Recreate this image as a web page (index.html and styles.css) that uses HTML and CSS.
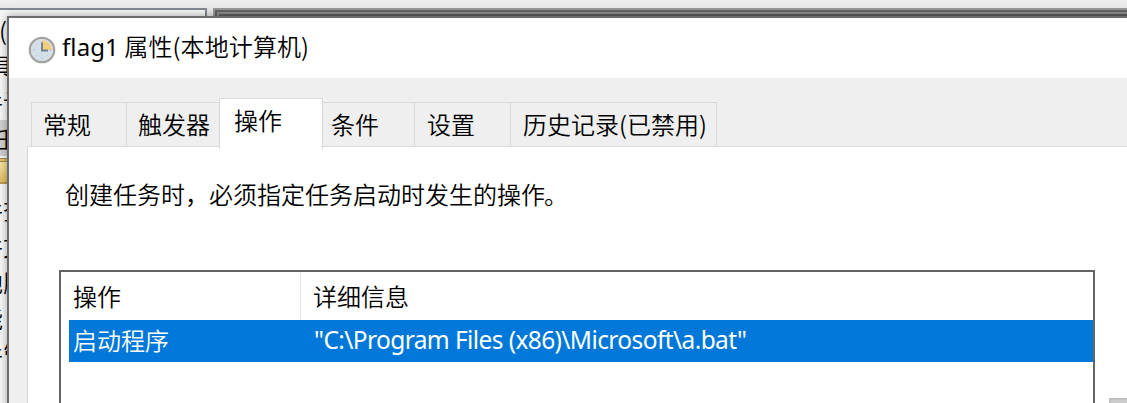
FILE: index.html
```
<!DOCTYPE html>
<html lang="zh-CN">
<head>
<meta charset="utf-8">
<title>flag1 属性</title>
<link rel="stylesheet" href="styles.css">
</head>
<body>
<div class="desktop">
  <div class="tree">
    <span class="node root">(本</span>
    <span class="node n1">具</span>
    <span class="node n2">件计</span>
    <span class="node n3 selected">任</span>
    <span class="folder"></span>
    <span class="node n4">件查</span>
    <span class="node n5">件文</span>
    <span class="node n6">地服</span>
    <span class="node n7">能</span>
    <span class="node n8">件管</span>
  </div>
  <div class="backpane"></div>
  <div class="dialog">
    <header class="titlebar">
      <svg class="clock" viewBox="0 0 28 28">
        <circle cx="14" cy="14" r="12.2" fill="#d3e0e9" stroke="#a2a2a0" stroke-width="2.2"/>
        <path d="M14 14V4A10 10 0 0 1 24 14Z" fill="#f2cf7d"/>
        <circle cx="14" cy="14" r="10.6" fill="none" stroke="#dadedf" stroke-width="1"/>
        <path d="M14 5v2M14 21v2M5 14h2M21 14h2M7.7 7.7l1 1M19.3 19.3l1 1M7.7 20.3l1-1M20.3 7.7l-1 1" stroke="#b3c1ca" stroke-width="1"/>
        <path d="M14 6.5V14.5H20" fill="none" stroke="#75838c" stroke-width="2"/>
      </svg>
      <h1 class="title"><span class="latin">flag1</span> 属性(本地计算机)</h1>
    </header>
    <nav class="tabs">
      <div class="tab general">常规</div>
      <div class="tab trigger">触发器</div>
      <div class="tab active">操作</div>
      <div class="tab condition">条件</div>
      <div class="tab settings">设置</div>
      <div class="tab history">历史记录(已禁用)</div>
    </nav>
    <main class="panel">
      <p class="hint">创建任务时，必须指定任务启动时发生的操作<span class="stop">。</span></p>
      <div class="list">
        <div class="row head"><div class="cell first">操作</div><div class="cell">详细信息</div></div>
        <div class="row picked"><div class="cell first">启动程序</div><div class="cell path">"C:\Program Files (x86)\Microsoft\a.bat"</div></div>
      </div>
      <div class="scroll"></div>
    </main>
  </div>
</div>
</body>
</html>
```
FILE: styles.css
```
* { box-sizing: border-box; }
body { margin: 0; }
.desktop {
  position: relative;
  width: 1127px;
  height: 403px;
  overflow: hidden;
  background: linear-gradient(#efefef 0, #e6e6e6 9px, #e6e6e6 100%);
  font: 24px/36px "Noto Sans CJK SC", sans-serif;
  font-weight: 350;
  color: #000;
}
.tree {
  position: absolute;
  left: -2px;
  top: 8px;
  width: 209px;
  height: 400px;
  border: 2px solid #828790;
  background: #f6f6f6;
  overflow: hidden;
}
.node { position: absolute; left: -21px; white-space: nowrap; }
.root { top: 2px; left: -1px; }
.n1 { top: 38px; left: -11px; }
.n2 { top: 74px; }
.n3 { top: 110px; left: -9px; }
.n4 { top: 182px; }
.n5 { top: 218px; }
.n6 { top: 254px; }
.n7 { top: 290px; }
.n8 { top: 326px; }
.selected { background: #cfcfcf; }
.folder {
  position: absolute;
  left: -3px;
  top: 148px;
  width: 16px;
  height: 26px;
  border: 2px solid #bb9a50;
  border-top: 4px double #9b854f;
  background: linear-gradient(#f6e3a0, #e0bd60);
}
.backpane {
  position: absolute;
  left: 213px;
  top: 8px;
  width: 920px;
  height: 100px;
  border: 2px solid #979797;
  background: #505050;
  box-shadow: inset 0 0 0 2px #646464, inset 0 0 0 4px #8d8d8d, inset 0 0 0 6px #5c5c5c;
}
.dialog {
  position: absolute;
  left: 7px;
  top: 16px;
  width: 1140px;
  height: 400px;
  border: 2px solid #6c6c6c;
  background: #efefef;
  box-shadow: 0 0 8px rgba(0,0,0,.35);
  display: flex;
  flex-direction: column;
}
.titlebar {
  height: 60px;
  flex: none;
  display: flex;
  align-items: flex-start;
  padding: 17px 0 0 19px;
  background: #fff;
}
.clock { width: 28px; height: 28px; margin-top: 1px; }
.title {
  margin: -7px 0 0 6px;
  font: inherit;
  letter-spacing: .1px;
  white-space: nowrap;
}
.latin { font-family: "Noto Sans", sans-serif; font-weight: 400; }
.tabs {
  display: flex;
  align-items: flex-end;
  height: 69px;
  padding-left: 22px;
  flex: none;
}
.tab {
  height: 45px;
  padding: 3px 0 0 11px;
  border: 1px solid #d9d9d9;
  border-right: 0;
  white-space: nowrap;
}
.general { width: 95px; }
.trigger { width: 93px; }
.active {
  width: 104px;
  height: 51px;
  margin-bottom: -2px;
  padding-left: 14px;
  border-right: 1px solid #d9d9d9;
  border-bottom: 0;
  background: #fff;
  position: relative;
  z-index: 1;
}
.condition { width: 91px; padding-left: 8px; border-left: 0; }
.settings { width: 96px; padding-left: 12px; }
.history { width: 207px; padding-left: 12px; border-right: 1px solid #d9d9d9; }
.panel {
  position: relative;
  flex: 1;
  margin: -1px 0 0 18px;
  padding: 29px 0 0 31px;
  border: 1px solid #d9d9d9;
  background: #fff;
}
.hint { margin: 0 0 0 6px; height: 94px; white-space: nowrap; }
.stop { margin-left: -1px; }
.list {
  width: 1036px;
  height: 160px;
  border: 2px solid #646464;
}
.row { display: flex; margin-left: 8px; white-space: nowrap; }
.head { height: 48px; line-height: 48px; }
.picked { height: 42px; line-height: 39px; background: #0078d9; color: #fff; }
.cell { padding-left: 12px; }
.first { width: 232px; padding-left: 4px; }
.head .first { border-right: 1px solid #e3e3e3; }
.path {
  padding-left: 13px;
  font-family: "Noto Sans", sans-serif;
  font-size: 24.5px;
  font-weight: 400;
  line-height: 40px;
  letter-spacing: -.6px;
}
.scroll {
  position: absolute;
  left: 1081px;
  top: 251px;
  width: 40px;
  height: 20px;
  border: 2px solid #bfbfbf;
  background: #ccc;
}
```
